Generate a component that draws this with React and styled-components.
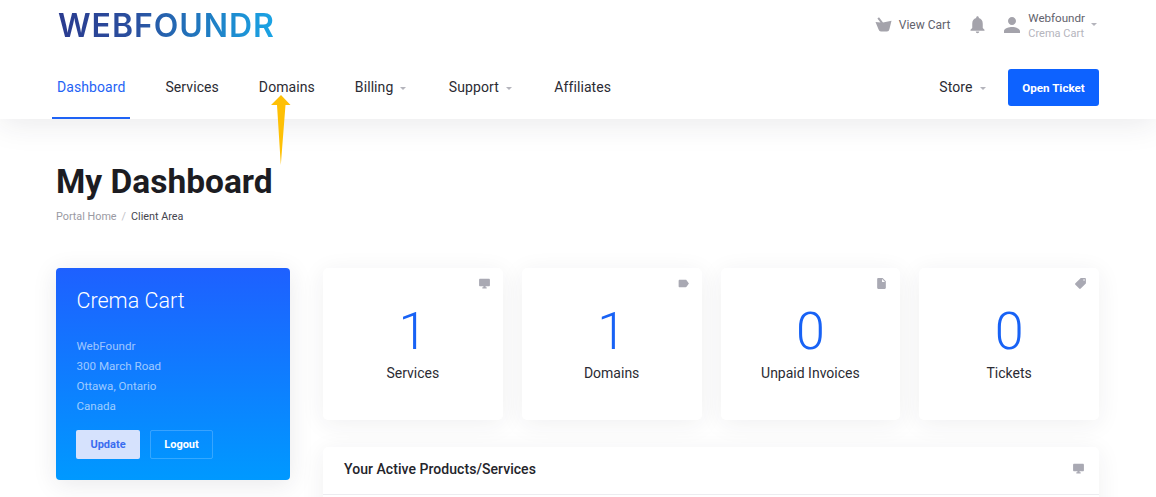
import React from "react";
import styled, { createGlobalStyle } from "styled-components";
import {
  MdNotifications,
  MdPerson,
  MdDesktopWindows,
  MdLabel,
  MdInsertDriveFile,
  MdLocalOffer
} from "react-icons/md";

const GlobalStyle = createGlobalStyle`
  html, body {
    margin: 0;
    height: 497px;
    overflow: hidden;
    background: #fff;
    font-family: Roboto, "Liberation Sans", sans-serif;
  }
`;

const stats = [
  { value: "1", label: "Services", Icon: MdDesktopWindows },
  { value: "1", label: "Domains", Icon: MdLabel },
  { value: "0", label: "Unpaid Invoices", Icon: MdInsertDriveFile },
  { value: "0", label: "Tickets", Icon: MdLocalOffer, flip: true }
];

const navLeft = [
  { label: "Dashboard", active: true },
  { label: "Services" },
  { label: "Domains" },
  { label: "Billing", caret: true },
  { label: "Support", caret: true },
  { label: "Affiliates" }
];

function BasketIcon() {
  return (
    <svg width="17" height="15" viewBox="0 0 17 15">
      <path d="M0.5 5 L5.5 5.6 L2.4 1.4 L4 0.2 L8 5.6 L16.5 3.8 L14.4 12.2 Q13.9 14.5 12 14.5 L6 14.5 Q4.2 14.5 3.6 12.6 Z" fill="#a4a3ab" />
    </svg>
  );
}

function App() {
  return (
    <Page>
      <GlobalStyle />
      <Header>
        <TopRow>
          <Logo>WEBFOUNDR</Logo>
          <Account>
            <CartLink>
              <BasketIcon />
              View Cart
            </CartLink>
            <Bell>
              <MdNotifications size={21} />
            </Bell>
            <UserIcon>
              <MdPerson size={24} />
            </UserIcon>
            <UserText>
              <UserName>Webfoundr</UserName>
              <UserCompany>Crema Cart</UserCompany>
            </UserText>
            <AccountCaret />
          </Account>
        </TopRow>
        <NavRow>
          <NavList>
            {navLeft.map((item) => (
              <NavItem key={item.label} $active={item.active}>
                {item.label}
                {item.caret && <Caret />}
              </NavItem>
            ))}
          </NavList>
          <NavRight>
            <NavItem>
              Store
              <Caret />
            </NavItem>
            <TicketButton>Open Ticket</TicketButton>
          </NavRight>
        </NavRow>
        <Arrow width="22" height="72" viewBox="0 0 22 72">
          <path d="M11 0 L20.5 10 L15.5 10 L10.8 70 L7 10 L1 10 Z" fill="#fec005" />
        </Arrow>
      </Header>

      <Main>
        <Title>My Dashboard</Title>
        <Breadcrumb>
          <span>Portal Home</span>
          <Slash>/</Slash>
          <Current>Client Area</Current>
        </Breadcrumb>
        <Columns>
          <ClientCard>
            <ClientName>Crema Cart</ClientName>
            <Address>
              WebFoundr
              <br />
              300 March Road
              <br />
              Ottawa, Ontario
              <br />
              Canada
            </Address>
            <CardButtons>
              <UpdateButton>Update</UpdateButton>
              <LogoutButton>Logout</LogoutButton>
            </CardButtons>
          </ClientCard>
          <Content>
            <StatGrid>
              {stats.map(({ value, label, Icon, flip }) => (
                <StatCard key={label}>
                  <StatIcon $flip={flip}>
                    <Icon size={13} />
                  </StatIcon>
                  <StatValue>{value}</StatValue>
                  <StatLabel>{label}</StatLabel>
                </StatCard>
              ))}
            </StatGrid>
            <Panel>
              <PanelHeader>
                <PanelTitle>Your Active Products/Services</PanelTitle>
                <PanelIcon>
                  <MdDesktopWindows size={13} />
                </PanelIcon>
              </PanelHeader>
            </Panel>
          </Content>
        </Columns>
      </Main>
    </Page>
  );
}

const Page = styled.div`
  width: 1156px;
  height: 497px;
  overflow: hidden;
`;

const Header = styled.header`
  position: relative;
  height: 119px;
  background: #fff;
  box-shadow: 0 4px 30px rgba(40, 40, 60, 0.1);
`;

const TopRow = styled.div`
  height: 54px;
  padding: 0 59px 0 58px;
  display: flex;
  justify-content: space-between;
  align-items: center;
`;

const Logo = styled.div`
  font-family: Inter, sans-serif;
  font-size: 32px;
  font-weight: 600;
  letter-spacing: 0.95px;
  line-height: 34px;
  margin-top: -3px;
  background: linear-gradient(90deg, #2a3b8f 0%, #2a4f9f 35%, #1f7ec4 70%, #1aa5e6 100%);
  -webkit-background-clip: text;
  background-clip: text;
  color: transparent;
`;

const Account = styled.div`
  display: flex;
  align-items: center;
  margin-top: -5px;
`;

const CartLink = styled.div`
  display: flex;
  align-items: center;
  gap: 7px;
  font-size: 12px;
  color: #62626c;
`;

const Bell = styled.div`
  display: flex;
  color: #a4a3ab;
  margin-left: 17px;
`;

const UserIcon = styled.div`
  display: flex;
  color: #a4a3ab;
  margin-left: 12px;
`;

const UserText = styled.div`
  margin: 2px 0 0 4px;
  line-height: 15px;
`;

const UserName = styled.div`
  font-size: 11.6px;
  color: #62626c;
`;

const UserCompany = styled.div`
  font-size: 11px;
  color: #b5b5bd;
`;

const Caret = styled.span`
  display: inline-block;
  width: 0;
  height: 0;
  margin: 0 2.5px 0 7px;
  border-left: 3px solid transparent;
  border-right: 3px solid transparent;
  border-top: 3px solid #b4b4bc;
  vertical-align: middle;
`;

const AccountCaret = styled(Caret)`
  margin: 0 0 0 6px;
`;

const NavRow = styled.nav`
  height: 65px;
  padding: 0 57px 0 52px;
  display: flex;
  justify-content: space-between;
`;

const NavList = styled.div`
  display: flex;
  gap: 30px;
`;

const NavItem = styled.div`
  height: 65px;
  box-sizing: border-box;
  padding: 0 5px;
  line-height: 66px;
  font-size: 14px;
  letter-spacing: 0.08px;
  white-space: nowrap;
  color: ${(p) => (p.$active ? "#1f63f5" : "#2b2b33")};
  border-bottom: 2px solid ${(p) => (p.$active ? "#1f63f5" : "transparent")};
`;

const NavRight = styled.div`
  display: flex;
  align-items: flex-start;
  gap: 15px;
`;

const TicketButton = styled.button`
  width: 91px;
  height: 37px;
  margin-top: 15px;
  border: none;
  border-radius: 3px;
  background: #0d62ff;
  color: #fff;
  font-family: Roboto, sans-serif;
  font-size: 11.6px;
  font-weight: 700;
  padding: 0;
`;

const Arrow = styled.svg`
  position: absolute;
  left: 270px;
  top: 95px;
`;

const Main = styled.main`
  padding: 0 57px 0 56px;
`;

const Title = styled.h1`
  margin: 42px 0 0;
  font-size: 33.5px;
  font-weight: 700;
  line-height: 42px;
  color: #1c1c22;
`;

const Breadcrumb = styled.div`
  margin-top: 7px;
  font-size: 10.8px;
  line-height: 14px;
  color: #9a9aa3;
`;

const Slash = styled.span`
  margin: 0 5px;
  color: #c2c2c8;
`;

const Current = styled.span`
  color: #45454e;
`;

const Columns = styled.div`
  margin-top: 44px;
  display: flex;
  gap: 33px;
  align-items: flex-start;
`;

const ClientCard = styled.section`
  width: 234px;
  height: 212px;
  flex: none;
  box-sizing: border-box;
  padding: 20px 20.5px;
  border-radius: 4px;
  color: #fff;
  background: linear-gradient(180deg, #1e60ff 0%, #0099ff 100%);
  box-shadow: 0 4px 24px rgba(40, 40, 60, 0.1);
`;

const ClientName = styled.h3`
  margin: 0;
  font-size: 21.5px;
  font-weight: 300;
  line-height: 26px;
  color: #fff;
`;

const Address = styled.p`
  margin: 22px 0 0;
  font-size: 11.6px;
  line-height: 20px;
  color: rgba(255, 255, 255, 0.6);
`;

const CardButtons = styled.div`
  display: flex;
  gap: 10px;
  margin: 14px 0 0 -0.5px;
`;

const UpdateButton = styled.button`
  width: 64px;
  height: 29px;
  padding: 0;
  border: 1px solid transparent;
  border-radius: 2px;
  background: #d6e2fd;
  color: #3a6cf0;
  font-family: Roboto, sans-serif;
  font-size: 11px;
  font-weight: 700;
`;

const LogoutButton = styled(UpdateButton)`
  width: 63px;
  background: transparent;
  border-color: rgba(255, 255, 255, 0.2);
  color: #fff;
`;

const Content = styled.div`
  flex: 1;
  min-width: 0;
`;

const StatGrid = styled.div`
  display: grid;
  grid-template-columns: repeat(4, 1fr);
  gap: 19px;
`;

const StatCard = styled.div`
  position: relative;
  height: 152px;
  box-sizing: border-box;
  padding-top: 34px;
  border-radius: 5px;
  background: #fff;
  text-align: center;
  box-shadow: 0 4px 24px rgba(40, 40, 60, 0.07);
`;

const StatIcon = styled.span`
  position: absolute;
  top: 9px;
  right: 12px;
  display: flex;
  color: #a9a9b3;
  transform: ${(p) => (p.$flip ? "scaleX(-1)" : "none")};
`;

const StatValue = styled.div`
  font-size: 52px;
  font-weight: 300;
  line-height: 60px;
  color: #1862f5;
`;

const StatLabel = styled.div`
  margin-top: 1px;
  font-size: 14px;
  line-height: 20px;
  color: #2b2b33;
`;

const Panel = styled.section`
  margin-top: 27px;
  height: 120px;
  border-radius: 5px;
  background: #fff;
  box-shadow: 0 4px 24px rgba(40, 40, 60, 0.07);
`;

const PanelHeader = styled.div`
  height: 48px;
  box-sizing: border-box;
  padding: 0 14px 4px 21px;
  display: flex;
  align-items: center;
  justify-content: space-between;
  border-bottom: 1px solid #ececf0;
`;

const PanelTitle = styled.h3`
  margin: 0;
  font-size: 14px;
  font-weight: 500;
  letter-spacing: 0.05px;
  color: #24242b;
`;

const PanelIcon = styled.span`
  display: flex;
  color: #a9a9b3;
`;

export default App;
